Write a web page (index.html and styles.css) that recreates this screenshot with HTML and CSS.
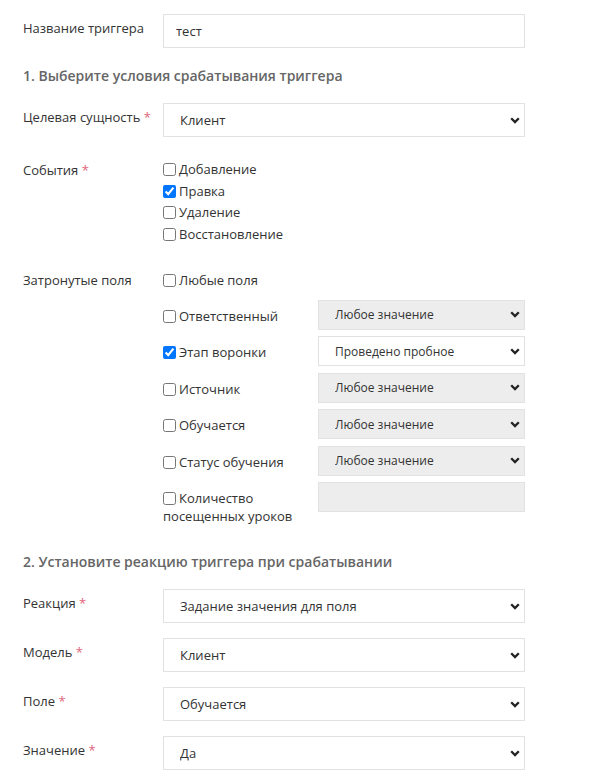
FILE: index.html
```html
<!DOCTYPE html>
<html lang="ru">
<head>
<meta charset="utf-8">
<title>Триггер</title>
<link rel="stylesheet" href="styles.css">
</head>
<body>
<div class="form">
  <div class="row">
    <label class="lbl">Название триггера</label>
    <div class="ctl"><input class="field input" type="text" value="тест"></div>
  </div>

  <h3 class="section first">1. Выберите условия срабатывания триггера</h3>

  <div class="row">
    <label class="lbl">Целевая сущность <span class="req">*</span></label>
    <div class="ctl"><select class="field select"><option>Клиент</option></select></div>
  </div>

  <div class="row events">
    <label class="lbl">События <span class="req">*</span></label>
    <div class="ctl checklist">
      <label class="chk"><input type="checkbox">Добавление</label>
      <label class="chk"><input type="checkbox" checked>Правка</label>
      <label class="chk"><input type="checkbox">Удаление</label>
      <label class="chk"><input type="checkbox">Восстановление</label>
    </div>
  </div>

  <div class="row affected">
    <label class="lbl">Затронутые поля</label>
    <div class="ctl">
      <label class="chk any"><input type="checkbox">Любые поля</label>
      <div class="subrows">
        <div class="subrow">
          <label class="chk sub"><input type="checkbox">Ответственный</label>
          <select class="field small disabled" disabled><option>Любое значение</option></select>
        </div>
        <div class="subrow">
          <label class="chk sub"><input type="checkbox" checked>Этап воронки</label>
          <select class="field small"><option>Проведено пробное</option></select>
        </div>
        <div class="subrow">
          <label class="chk sub"><input type="checkbox">Источник</label>
          <select class="field small disabled" disabled><option>Любое значение</option></select>
        </div>
        <div class="subrow">
          <label class="chk sub"><input type="checkbox">Обучается</label>
          <select class="field small disabled" disabled><option>Любое значение</option></select>
        </div>
        <div class="subrow">
          <label class="chk sub"><input type="checkbox">Статус обучения</label>
          <select class="field small disabled" disabled><option>Любое значение</option></select>
        </div>
        <div class="subrow">
          <label class="chk sub"><input type="checkbox">Количество посещенных уроков</label>
          <input class="field small-input disabled" type="text" disabled>
        </div>
      </div>
    </div>
  </div>

  <h3 class="section second">2. Установите реакцию триггера при срабатывании</h3>

  <div class="row gap">
    <label class="lbl">Реакция <span class="req">*</span></label>
    <div class="ctl"><select class="field select"><option>Задание значения для поля</option></select></div>
  </div>
  <div class="row gap">
    <label class="lbl">Модель <span class="req">*</span></label>
    <div class="ctl"><select class="field select"><option>Клиент</option></select></div>
  </div>
  <div class="row gap">
    <label class="lbl">Поле <span class="req">*</span></label>
    <div class="ctl"><select class="field select"><option>Обучается</option></select></div>
  </div>
  <div class="row gap">
    <label class="lbl">Значение <span class="req">*</span></label>
    <div class="ctl"><select class="field select"><option>Да</option></select></div>
  </div>
</div>
</body>
</html>
```
FILE: styles.css
```css
html, body {
  margin: 0;
  padding: 0;
  background: #fff;
}

body {
  font-family: "Open Sans", "Liberation Sans", sans-serif;
  font-size: 13px;
  color: #333;
}

.form {
  width: 502px;
  padding: 14px 0 0 23px;
}

.row {
  display: flex;
  align-items: flex-start;
}

.row.gap {
  margin-bottom: 15px;
}

.lbl {
  width: 140px;
  flex: none;
  line-height: 20px;
  padding-top: 4px;
}

.req {
  color: #e0657a;
}

.ctl {
  flex: 1;
  min-width: 0;
}

.field {
  box-sizing: border-box;
  width: 100%;
  font-family: inherit;
  color: #333;
  border: 1px solid #e2e2e2;
  background-color: #fff;
  outline: none;
  margin: 0;
  border-radius: 0;
}

.input {
  height: 34px;
  font-size: 13px;
  padding: 0 12px;
}

.select {
  -webkit-appearance: none;
  appearance: none;
  height: 34px;
  font-size: 13px;
  padding: 0 24px 0 16px;
  background-image: url("data:image/svg+xml;utf8,<svg xmlns='http://www.w3.org/2000/svg' width='10' height='7' viewBox='0 0 10 7'><path d='M1.2 1.3 L5 5.1 L8.8 1.3' fill='none' stroke='%23222' stroke-width='2.3'/></svg>");
  background-repeat: no-repeat;
  background-position: right 4px center;
  background-size: 10px 7px;
}

.small {
  -webkit-appearance: none;
  appearance: none;
  height: 30px;
  font-size: 12px;
  padding: 0 24px 0 16px;
  background-image: url("data:image/svg+xml;utf8,<svg xmlns='http://www.w3.org/2000/svg' width='10' height='7' viewBox='0 0 10 7'><path d='M1.2 1.3 L5 5.1 L8.8 1.3' fill='none' stroke='%23222' stroke-width='2.3'/></svg>");
  background-repeat: no-repeat;
  background-position: right 4px center;
  background-size: 10px 7px;
  flex: 1;
  width: auto;
  min-width: 0;
}

.small-input {
  height: 30px;
  flex: 1;
  width: auto;
  min-width: 0;
}

.field.disabled {
  background-color: #ededed;
  color: #333;
  opacity: 1;
}

.section {
  margin: 0;
  font-size: 14px;
  font-weight: 600;
  line-height: 20px;
  color: #666;
}

.section.first {
  margin: 18px 0 17px;
}

.section.second {
  margin: 27px 0 17px;
}

.events {
  margin-top: 19px;
}

.checklist {
  padding-top: 3px;
}

.chk {
  display: flex;
  align-items: center;
  line-height: 21.5px;
}

.chk input {
  width: 13px;
  height: 13px;
  margin: 0 3px 0 0;
  flex: none;
}

.affected {
  margin-top: 21px;
}

.any {
  padding-top: 4px;
}

.subrows {
  display: flex;
  flex-direction: column;
  gap: 6.5px;
  margin-top: 8px;
}

.subrow {
  display: flex;
  align-items: flex-start;
}

.chk.sub {
  width: 155px;
  flex: none;
  display: block;
  line-height: 18px;
  padding-top: 7px;
}

.chk.sub input {
  vertical-align: -2px;
}
```
